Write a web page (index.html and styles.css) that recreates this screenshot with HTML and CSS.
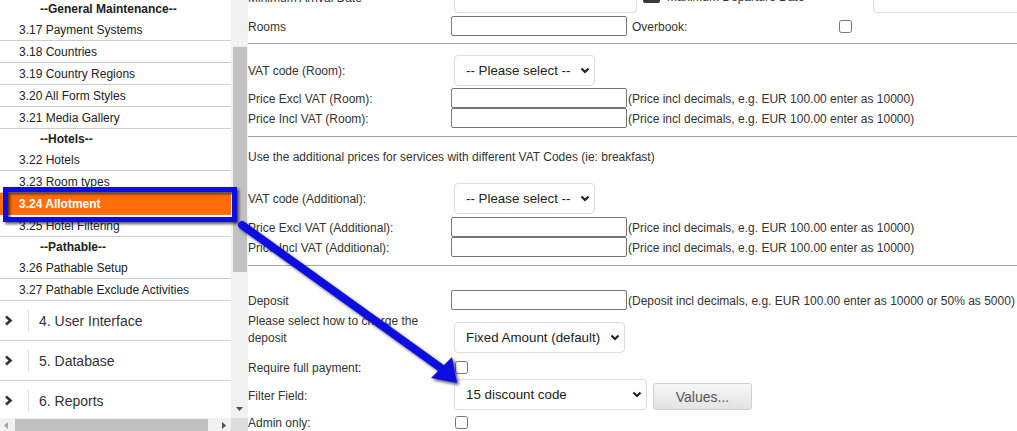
FILE: index.html
```html
<!DOCTYPE html>
<html>
<head>
<meta charset="utf-8">
<link rel="stylesheet" href="styles.css">
</head>
<body>
<div class="page">
  <aside class="sidebar">
    <div class="nav">
      <div class="nav-list">
        <div class="nav-head">--General Maintenance--</div>
        <div class="nav-item">3.17 Payment Systems</div>
        <div class="nav-item">3.18 Countries</div>
        <div class="nav-item">3.19 Country Regions</div>
        <div class="nav-item">3.20 All Form Styles</div>
        <div class="nav-item">3.21 Media Gallery</div>
        <div class="nav-head">--Hotels--</div>
        <div class="nav-item">3.22 Hotels</div>
        <div class="nav-item">3.23 Room types</div>
        <div class="nav-item active">3.24 Allotment</div>
        <div class="nav-item">3.25 Hotel Filtering</div>
        <div class="nav-head">--Pathable--</div>
        <div class="nav-item">3.26 Pathable Setup</div>
        <div class="nav-item">3.27 Pathable Exclude Activities</div>
        <div class="nav-section">
          <span class="chev"><svg width="9" height="11" viewBox="0 0 9 11"><polyline points="2,1.5 6.5,5.5 2,9.5" fill="none" stroke="#333" stroke-width="2.6"/></svg></span>
          <span class="vsep"></span>
          <span class="sec-title">4. User Interface</span>
        </div>
        <div class="nav-section">
          <span class="chev"><svg width="9" height="11" viewBox="0 0 9 11"><polyline points="2,1.5 6.5,5.5 2,9.5" fill="none" stroke="#333" stroke-width="2.6"/></svg></span>
          <span class="vsep"></span>
          <span class="sec-title">5. Database</span>
        </div>
        <div class="nav-section">
          <span class="chev"><svg width="9" height="11" viewBox="0 0 9 11"><polyline points="2,1.5 6.5,5.5 2,9.5" fill="none" stroke="#333" stroke-width="2.6"/></svg></span>
          <span class="vsep"></span>
          <span class="sec-title">6. Reports</span>
        </div>
      </div>
    </div>
    <div class="vscroll">
      <div class="vthumb"></div>
      <div class="vspace"></div>
      <svg class="varrow" width="9" height="6" viewBox="0 0 9 6"><polygon points="1,1 8,1 4.5,5" fill="#505050"/></svg>
    </div>
    <div class="hscroll">
      <svg class="harrow-l" width="6" height="9" viewBox="0 0 6 9"><polygon points="5,1 5,8 1,4.5" fill="#a3a3a3"/></svg>
      <div class="hthumb"></div>
      <svg class="harrow-r" width="6" height="9" viewBox="0 0 6 9"><polygon points="1,1 1,8 5,4.5" fill="#505050"/></svg>
    </div>
    <div class="corner"></div>
  </aside>

  <main class="main">
    <div class="form">
      <div class="row row-top">
        <span class="lbl">Minimum Arrival Date</span>
        <input class="tinput" type="text">
        <span class="cal"></span>
        <span class="lbl2">Maximum Departure Date</span>
        <input class="tinput tinput-r" type="text">
      </div>
      <div class="row row-rooms">
        <span class="lbl">Rooms</span>
        <input class="inp" type="text">
        <span class="lbl lbl-ob">Overbook:</span>
        <input class="chk" type="checkbox">
      </div>
      <div class="sep sep1"></div>
      <div class="row row-sel row-vat1">
        <span class="lbl">VAT code (Room):</span>
        <span class="selwrap">
          <select class="sel w141"><option>-- Please select --</option></select>
          <svg class="caret" width="10" height="7" viewBox="0 0 10 7"><polyline points="1.5,1.5 5,5 8.5,1.5" fill="none" stroke="#222" stroke-width="2.2"/></svg>
        </span>
      </div>
      <div class="row row-in">
        <span class="lbl">Price Excl VAT (Room):</span>
        <input class="inp" type="text">
        <span class="hint">(Price incl decimals, e.g. EUR 100.00 enter as 10000)</span>
      </div>
      <div class="row row-in">
        <span class="lbl">Price Incl VAT (Room):</span>
        <input class="inp" type="text">
        <span class="hint">(Price incl decimals, e.g. EUR 100.00 enter as 10000)</span>
      </div>
      <div class="sep sep2"></div>
      <div class="row row-text">Use the additional prices for services with different VAT Codes (ie: breakfast)</div>
      <div class="row row-sel row-vat2">
        <span class="lbl">VAT code (Additional):</span>
        <span class="selwrap">
          <select class="sel w141"><option>-- Please select --</option></select>
          <svg class="caret" width="10" height="7" viewBox="0 0 10 7"><polyline points="1.5,1.5 5,5 8.5,1.5" fill="none" stroke="#222" stroke-width="2.2"/></svg>
        </span>
      </div>
      <div class="row row-in row-add1">
        <span class="lbl">Price Excl VAT (Additional):</span>
        <input class="inp" type="text">
        <span class="hint">(Price incl decimals, e.g. EUR 100.00 enter as 10000)</span>
      </div>
      <div class="row row-in">
        <span class="lbl">Price Incl VAT (Additional):</span>
        <input class="inp" type="text">
        <span class="hint">(Price incl decimals, e.g. EUR 100.00 enter as 10000)</span>
      </div>
      <div class="sep sep3"></div>
      <div class="row row-in row-deposit">
        <span class="lbl">Deposit</span>
        <input class="inp" type="text">
        <span class="hint">(Deposit incl decimals, e.g. EUR 100.00 enter as 10000 or 50% as 5000)</span>
      </div>
      <div class="row row-charge">
        <span class="lbl lbl-wrap">Please select how to charge the deposit</span>
        <span class="selwrap selwrap-charge">
          <select class="sel w171"><option>Fixed Amount (default)</option></select>
          <svg class="caret" width="10" height="7" viewBox="0 0 10 7"><polyline points="1.5,1.5 5,5 8.5,1.5" fill="none" stroke="#222" stroke-width="2.2"/></svg>
        </span>
      </div>
      <div class="row row-chk">
        <span class="lbl">Require full payment:</span>
        <input class="chk" type="checkbox">
      </div>
      <div class="row row-filter">
        <span class="lbl">Filter Field:</span>
        <span class="selwrap">
          <select class="sel w193"><option>15 discount code</option></select>
          <svg class="caret" width="10" height="7" viewBox="0 0 10 7"><polyline points="1.5,1.5 5,5 8.5,1.5" fill="none" stroke="#222" stroke-width="2.2"/></svg>
        </span>
        <button class="btn" type="button">Values...</button>
      </div>
      <div class="row row-chk">
        <span class="lbl">Admin only:</span>
        <input class="chk" type="checkbox">
      </div>
    </div>
  </main>

  <svg class="overlay" width="1017" height="431" viewBox="0 0 1017 431">
    <defs>
      <filter id="sh" x="-20%" y="-20%" width="140%" height="140%">
        <feDropShadow dx="2" dy="2" stdDeviation="1.6" flood-color="#000" flood-opacity="0.65"/>
      </filter>
    </defs>
    <g filter="url(#sh)">
      <rect x="5.5" y="189.5" width="229" height="30" fill="none" stroke="#0c0ce0" stroke-width="5"/>
      <line x1="242" y1="225" x2="441" y2="368" stroke="#0c0ce0" stroke-width="8" stroke-linecap="round"/>
      <polygon points="457,383 431,378 452,357" fill="#0c0ce0"/>
    </g>
  </svg>
</div>
</body>
</html>
```

FILE: styles.css
```css
* { box-sizing: border-box; }

html, body {
  margin: 0;
  padding: 0;
  background: #fff;
}

body {
  font-family: "Liberation Sans", Arial, sans-serif;
  font-size: 12px;
  color: #333;
}

.page {
  position: relative;
  width: 1017px;
  height: 431px;
  overflow: hidden;
  display: flex;
}

/* ---------- sidebar ---------- */
.sidebar {
  width: 248px;
  flex-shrink: 0;
  display: grid;
  grid-template-columns: 231px 17px;
  grid-template-rows: 418px 17px;
  background: #fff;
}

.nav {
  overflow: hidden;
}

.nav-list {
  margin-top: -1px;
}

.nav-head {
  height: 20px;
  line-height: 20px;
  padding-left: 40px;
  font-weight: bold;
  color: #222;
  white-space: nowrap;
}

.nav-item {
  height: 22px;
  line-height: 20px;
  padding-top: 1px;
  padding-left: 19px;
  border-bottom: 1px solid #cdcdcd;
  color: #222;
  white-space: nowrap;
}

.nav-item.active {
  background: #ff6d0b;
  border-bottom-color: #ff6d0b;
  color: #fff;
  font-weight: bold;
}

.nav-section {
  height: 40px;
  border-bottom: 1px solid #cdcdcd;
  display: flex;
  align-items: center;
}

.chev {
  width: 28px;
  padding-left: 4px;
  display: flex;
  align-items: center;
}

.vsep {
  width: 1px;
  height: 22px;
  background: #dcdcdc;
}

.sec-title {
  margin-left: 10px;
  font-size: 14px;
  color: #333;
}

.vscroll {
  background: #f1f1f1;
  display: flex;
  flex-direction: column;
  align-items: center;
}

.vthumb {
  margin-top: 47px;
  width: 14px;
  height: 225px;
  background: #c1c1c1;
}

.vspace {
  flex: 1;
}

.varrow {
  margin-bottom: 6px;
}

.hscroll {
  background: #f1f1f1;
  display: flex;
  align-items: flex-start;
}

.harrow-l {
  margin: 3px 0 0 3px;
}

.hthumb {
  margin-left: 6px;
  width: 193px;
  height: 14px;
  margin-top: 1px;
  background: #c1c1c1;
}

.harrow-r {
  margin: 3px 0 0 13px;
}

.corner {
  background: #dcdcdc;
}

/* ---------- main ---------- */
.main {
  flex: 1;
  overflow: hidden;
  background: #fff;
}

.form {
  margin-top: -21px;
}

.row {
  display: flex;
  align-items: center;
  white-space: nowrap;
}

.lbl {
  width: 203px;
  flex-shrink: 0;
  padding-top: 2px;
  color: #333;
}

.row-top {
  height: 35px;
}

.tinput {
  margin-left: 3px;
  width: 183px;
  height: 32px;
  border: 1px solid #dcdcdc;
  border-radius: 4px;
  background: #fff;
  flex-shrink: 0;
}

.cal {
  align-self: flex-start;
  margin-top: 8px;
  margin-left: 6px;
  width: 17px;
  height: 16px;
  border-radius: 2px;
  background: #3a3a3a;
  flex-shrink: 0;
}

.lbl2 {
  margin-left: 7px;
  width: 206px;
  flex-shrink: 0;
}

.tinput-r {
  margin-left: 0;
  width: 170px;
}

.row-rooms {
  height: 24px;
}

.inp {
  width: 176px;
  height: 20px;
  border: 1px solid #767676;
  border-radius: 2px;
  padding: 0 2px;
  background: #fff;
  flex-shrink: 0;
  font-family: inherit;
}

.lbl-ob {
  margin-left: 5px;
}

.chk {
  width: 13px;
  height: 13px;
  margin: 0 0 0 4px;
  flex-shrink: 0;
}

.sep {
  height: 1px;
  background: #a3a3a3;
}

.sep1 { margin-top: 5px; }
.sep2 { margin-top: 8px; }
.sep3 { margin-top: 8px; }

.row-sel {
  height: 36px;
}

.row-vat1 { margin-top: 8px; }
.row-vat2 { margin-top: 13px; }

.row-in {
  height: 20px;
}

.row-add1 { margin-top: 1px; }

.row-text {
  margin-top: 10px;
  height: 20px;
}

.hint {
  margin-left: 1px;
  padding-top: 2px;
  color: #333;
}

.selwrap {
  position: relative;
  margin-left: 3px;
  display: inline-flex;
}

.sel {
  appearance: none;
  -webkit-appearance: none;
  height: 31px;
  padding: 0 0 0 11px;
  border: 1px solid #dcdcdc;
  border-radius: 4px;
  background: #fff;
  font-family: "Liberation Sans", Arial, sans-serif;
  font-size: 13.33px;
  color: #222;
}

.w141 { width: 141px; }
.w171 { width: 171px; }
.w193 { width: 193px; }

.caret {
  position: absolute;
  right: 5px;
  top: 12px;
}

.row-deposit {
  margin-top: 24px;
}

.row-charge {
  margin-top: 1px;
  height: 43px;
  align-items: flex-start;
}

.lbl-wrap {
  white-space: normal;
  line-height: 17px;
}

.selwrap-charge {
  margin-top: 11px;
}

.row-chk {
  height: 20px;
}

.row-charge + .row-chk {
  margin-top: 3px;
}

.row-filter {
  height: 35px;
}

.btn {
  align-self: flex-end;
  margin: 0 0 2px 6px;
  width: 99px;
  height: 27px;
  border: 1px solid #cfcfcf;
  border-radius: 3px;
  background: linear-gradient(#f6f6f6, #e3e3e3);
  color: #555;
  font-family: "Liberation Sans", Arial, sans-serif;
  font-size: 14px;
  padding: 0;
}

/* ---------- annotation overlay ---------- */
.overlay {
  position: absolute;
  left: 0;
  top: 0;
  pointer-events: none;
}
```
